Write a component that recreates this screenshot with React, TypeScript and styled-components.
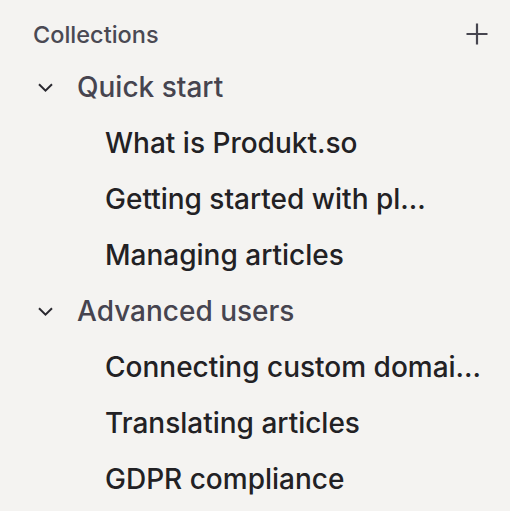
import React from "react";
import styled, { createGlobalStyle } from "styled-components";

const GlobalStyle = createGlobalStyle`
  body {
    margin: 0;
    background: #f4f3f1;
    font-family: Inter, "Noto Sans", sans-serif;
  }
`;

const Sidebar = styled.nav`
  width: 510px;
  min-height: 511px;
  box-sizing: border-box;
  padding: 10px 21px 0 33px;
  background: #f4f3f1;
`;

const Header = styled.div`
  display: flex;
  align-items: center;
  justify-content: space-between;
  height: 48px;
  margin-bottom: 1px;
`;

const Title = styled.span`
  font-size: 23.5px;
  font-weight: 500;
  color: #4a4953;
`;

const AddButton = styled.button`
  display: flex;
  align-items: center;
  justify-content: center;
  width: 24px;
  height: 24px;
  padding: 0;
  border: none;
  background: none;
  color: #46454f;
  cursor: pointer;
`;

const Group = styled.div`
  display: flex;
  flex-direction: column;
`;

const GroupRow = styled.div`
  display: flex;
  align-items: center;
  gap: 24px;
  height: 56px;
  padding-left: 5px;
`;

const GroupName = styled.span`
  font-size: 28px;
  font-weight: 500;
  color: #46444f;
`;

const Article = styled.a`
  display: flex;
  align-items: center;
  height: 56px;
  padding-left: 72px;
  font-size: 28px;
  font-weight: 500;
  color: #222124;
  text-decoration: none;
  white-space: nowrap;
`;

const Chevron = () => (
  <svg width="15" height="9" viewBox="0 0 15 9" fill="none">
    <path d="M1 1.2 7.5 7.6 14 1.2" stroke="#2a2930" strokeWidth="2" />
  </svg>
);

const Plus = () => (
  <svg width="22" height="22" viewBox="0 0 22 22" fill="none">
    <path d="M11 0.5v21M0.5 11h21" stroke="currentColor" strokeWidth="2.2" />
  </svg>
);

const collections = [
  {
    name: "Quick start",
    articles: ["What is Produkt.so", "Getting started with platform", "Managing articles"],
  },
  {
    name: "Advanced users",
    articles: ["Connecting custom domains", "Translating articles", "GDPR compliance"],
  },
];

const truncate = (text: string, max = 23) =>
  text.length > max ? text.slice(0, max) + "..." : text;

export default function App() {
  return (
    <>
      <GlobalStyle />
      <Sidebar>
        <Header>
          <Title>Collections</Title>
          <AddButton aria-label="Add collection">
            <Plus />
          </AddButton>
        </Header>
        {collections.map(c => (
          <Group key={c.name}>
            <GroupRow>
              <Chevron />
              <GroupName>{c.name}</GroupName>
            </GroupRow>
            {c.articles.map(a => (
              <Article key={a} href="#">
                {truncate(a)}
              </Article>
            ))}
          </Group>
        ))}
      </Sidebar>
    </>
  );
}
